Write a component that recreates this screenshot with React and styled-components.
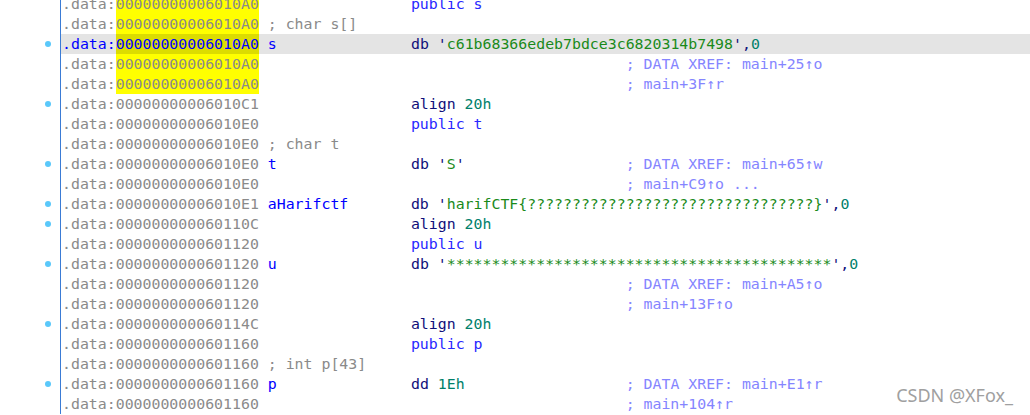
import React from 'react'
import styled, { createGlobalStyle } from 'styled-components'

const GlobalStyle = createGlobalStyle`
  html, body {
    margin: 0;
    padding: 0;
    background: #ffffff;
    overflow: hidden;
  }
`

const tones = {
  addr: '#8a8a8a',
  cur: '#0000ff',
  name: '#0000ff',
  pub: '#2828ff',
  op: '#10107a',
  str: '#1a8a1a',
  num: '#00806a',
  xref: '#8585ff',
  cmt: '#8a8a8a'
}

const Screen = styled.div`
  position: relative;
  width: 1030px;
  height: 415px;
  overflow: hidden;
  font-family: 'DejaVu Sans Mono', 'Liberation Mono', monospace;
  font-size: 14.87px;
`
const Listing = styled.div`
  display: flex;
  flex-direction: column;
  margin-top: -6px;
`
const Row = styled.div`
  display: flex;
  height: 20px;
`
const Gutter = styled.div`
  width: 60px;
  flex: none;
  display: flex;
  align-items: center;
  justify-content: flex-end;
  padding-right: 9px;
  box-sizing: border-box;
`
const Dot = styled.span`
  width: 6px;
  height: 6px;
  border-radius: 50%;
  background: #5ac8fa;
`
const Line = styled.div`
  flex: 1;
  border-left: 1px solid #3a7bd5;
  padding-left: 1px;
  background: ${p => (p.$current ? '#e4e4e4' : 'transparent')};
  white-space: pre;
  line-height: 20px;
`
const Tok = styled.span`
  color: ${p => tones[p.$tone]};
`
const Addr = styled.span`
  display: inline-block;
  height: 20px;
  color: ${p => (p.$current ? tones.cur : tones.addr)};
  background: ${p =>
    p.$mark ? (p.$current ? '#dcdc00' : '#ffff00') : 'transparent'};
`
const Watermark = styled.div`
  position: absolute;
  right: 17px;
  bottom: 8px;
  font-family: 'Noto Sans', 'DejaVu Sans', sans-serif;
  font-size: 18px;
  color: #a0a0a0;
`

const pad = (s, n) => s + ' '.repeat(Math.max(0, n - s.length))

// column positions in characters, after the 22-char address
const NAME_COL = 23
const INSR_COL = 39
const CMT_COL = 63

const rows = [
  { a: '6010A0', mark: 1, ins: [['pub', 'public s']] },
  { a: '6010A0', mark: 1, note: '; char s[]' },
  { a: '6010A0', mark: 1, cur: 1, dot: 1, name: 's',
    ins: [['op', 'db '], ['op', "'"], ['str', 'c61b68366edeb7bdce3c6820314b7498'], ['op', "',"], ['num', '0']] },
  { a: '6010A0', mark: 1, cmt: '; DATA XREF: main+25↑o' },
  { a: '6010A0', mark: 1, cmt: '; main+3F↑r' },
  { a: '6010C1', dot: 1, ins: [['op', 'align '], ['num', '20h']] },
  { a: '6010E0', ins: [['pub', 'public t']] },
  { a: '6010E0', note: '; char t' },
  { a: '6010E0', dot: 1, name: 't',
    ins: [['op', 'db '], ['op', "'"], ['str', 'S'], ['op', "'"]], cmt: '; DATA XREF: main+65↑w' },
  { a: '6010E0', cmt: '; main+C9↑o ...' },
  { a: '6010E1', dot: 1, name: 'aHarifctf',
    ins: [['op', 'db '], ['op', "'"], ['str', 'harifCTF{' + '?'.repeat(32) + '}'], ['op', "',"], ['num', '0']] },
  { a: '60110C', dot: 1, ins: [['op', 'align '], ['num', '20h']] },
  { a: '601120', ins: [['pub', 'public u']] },
  { a: '601120', dot: 1, name: 'u',
    ins: [['op', 'db '], ['op', "'"], ['str', '*'.repeat(43)], ['op', "',"], ['num', '0']] },
  { a: '601120', cmt: '; DATA XREF: main+A5↑o' },
  { a: '601120', cmt: '; main+13F↑o' },
  { a: '60114C', dot: 1, ins: [['op', 'align '], ['num', '20h']] },
  { a: '601160', ins: [['pub', 'public p']] },
  { a: '601160', note: '; int p[43]' },
  { a: '601160', dot: 1, name: 'p',
    ins: [['op', 'dd '], ['num', '1Eh']], cmt: '; DATA XREF: main+E1↑r' },
  { a: '601160', cmt: '; main+104↑r' }
]

const AsmLine = ({ row }) => {
  const addr = '0000000000' + row.a
  const insLen = row.ins ? row.ins.reduce((n, [, t]) => n + t.length, 0) : 0
  let col = 22
  const parts = []
  if (row.note) {
    parts.push(<Tok key='note' $tone='cmt'>{' ' + row.note}</Tok>)
    col += row.note.length + 1
  }
  if (row.name) {
    parts.push(<Tok key='name' $tone='name'>{pad(' ' + row.name, NAME_COL + 1 - col)}</Tok>)
    col = Math.max(NAME_COL, col + row.name.length + 1)
  }
  if (row.ins) {
    parts.push(' '.repeat(Math.max(0, INSR_COL - col)))
    col = INSR_COL
    row.ins.forEach(([tone, text], i) => {
      parts.push(<Tok key={'i' + i} $tone={tone}>{text}</Tok>)
    })
    col += insLen
  }
  if (row.cmt) {
    parts.push(' '.repeat(Math.max(1, CMT_COL - col)))
    parts.push(<Tok key='cmt' $tone='xref'>{row.cmt}</Tok>)
  }

  return (
    <Row>
      <Gutter>{row.dot ? <Dot /> : null}</Gutter>
      <Line $current={!!row.cur}>
        <Addr $current={!!row.cur}>.data:</Addr>
        <Addr $current={!!row.cur} $mark={!!row.mark}>{addr}</Addr>
        {parts}
      </Line>
    </Row>
  )
}

export default function App() {
  return (
    <Screen>
      <GlobalStyle />
      <Listing>
        {rows.map((row, i) => (
          <AsmLine key={i} row={row} />
        ))}
      </Listing>
      <Watermark>CSDN @XFox_</Watermark>
    </Screen>
  )
}
